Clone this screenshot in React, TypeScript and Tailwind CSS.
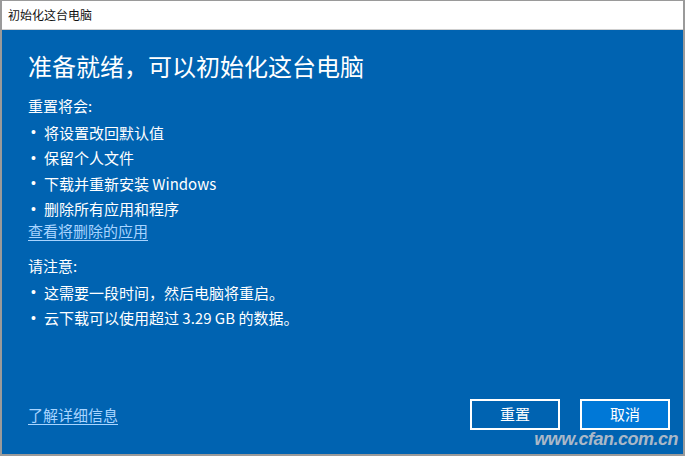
import React from "react";

const font = { fontFamily: '"Noto Sans CJK SC", "Noto Sans", sans-serif' };
const bulletFont = { fontFamily: '"Liberation Sans", Arial, sans-serif' };

function Bullets({ items }: { items: string[] }) {
  return (
    <ul className="mt-[4px] flex flex-col text-[15px]">
      {items.map((t) => (
        <li key={t} className="flex items-center h-[25.5px]">
          <span className="w-[16px] pl-[3px] text-[14px]" style={bulletFont}>
            •
          </span>
          <span className="leading-[20px]">{t}</span>
        </li>
      ))}
    </ul>
  );
}

export default function App() {
  return (
    <div
      className="w-[685px] h-[456px] bg-[#9a9a9a] pt-px pl-[2px] pr-[2px] pb-[2px] flex flex-col"
      style={font}
    >
      <div className="h-[29px] bg-white border-b border-[#cfcfcf] flex items-center pl-[6px] text-[12px] text-[#111] shrink-0">
        初始化这台电脑
      </div>
      <div className="flex-1 bg-[#0063b1] text-white flex flex-col pl-[26px] pr-[13px] relative">
        <div className="text-[24px] leading-[32px] mt-[20px]">准备就绪，可以初始化这台电脑</div>
        <div className="text-[15px] leading-[20px] mt-[14px]">重置将会:</div>
        <Bullets items={["将设置改回默认值", "保留个人文件", "下载并重新安装 Windows", "删除所有应用和程序"]} />
        <div className="text-[15px] leading-[20px] mt-[-1px] text-[#a8d4ff] underline underline-offset-[3px] self-start">
          查看将删除的应用
        </div>
        <div className="text-[15px] leading-[20px] mt-[15px]">请注意:</div>
        <Bullets items={["这需要一段时间，然后电脑将重启。", "云下载可以使用超过 3.29 GB 的数据。"]} />
        <div className="flex-1" />
        <div className="flex items-center mb-[24px]">
          <div className="text-[15px] leading-[20px] text-[#a8d4ff] underline underline-offset-[3px]">了解详细信息</div>
          <div className="flex-1" />
          <button className="w-[90px] h-[31px] border-2 border-white text-[15px] text-white bg-transparent">重置</button>
          <button className="w-[90px] h-[31px] border-2 border-white text-[15px] text-white bg-[#0078d7] ml-[20px]">取消</button>
        </div>
        <div
          className="absolute right-[5px] bottom-[1px] text-[18px] italic font-bold text-[#aab8c8] tracking-[-0.5px]"
          style={bulletFont}
        >
          www.cfan.com.cn
        </div>
      </div>
    </div>
  );
}
